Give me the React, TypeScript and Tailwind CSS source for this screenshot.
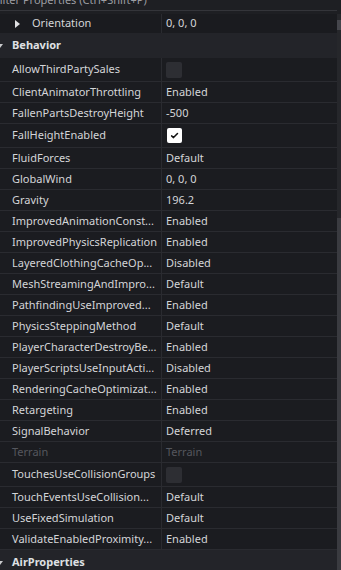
import React from 'react';

type Row = {
  name: string;
  value?: string;
  check?: boolean;
  disabled?: boolean;
};

// labels as the panel shows them (clipped with "...")
const rows: Row[] = [
  { name: 'AllowThirdPartySales', check: false },
  { name: 'ClientAnimatorThrottling', value: 'Enabled' },
  { name: 'FallenPartsDestroyHeight', value: '-500' },
  { name: 'FallHeightEnabled', check: true },
  { name: 'FluidForces', value: 'Default' },
  { name: 'GlobalWind', value: '0, 0, 0' },
  { name: 'Gravity', value: '196.2' },
  { name: 'ImprovedAnimationConst...', value: 'Enabled' },
  { name: 'ImprovedPhysicsReplication', value: 'Enabled' },
  { name: 'LayeredClothingCacheOp...', value: 'Disabled' },
  { name: 'MeshStreamingAndImpro...', value: 'Default' },
  { name: 'PathfindingUseImproved...', value: 'Enabled' },
  { name: 'PhysicsSteppingMethod', value: 'Default' },
  { name: 'PlayerCharacterDestroyBe...', value: 'Enabled' },
  { name: 'PlayerScriptsUseInputActi...', value: 'Disabled' },
  { name: 'RenderingCacheOptimizat...', value: 'Enabled' },
  { name: 'Retargeting', value: 'Enabled' },
  { name: 'SignalBehavior', value: 'Deferred' },
  { name: 'Terrain', value: 'Terrain', disabled: true },
  { name: 'TouchesUseCollisionGroups', check: false },
  { name: 'TouchEventsUseCollision...', value: 'Default' },
  { name: 'UseFixedSimulation', value: 'Default' },
  { name: 'ValidateEnabledProximity...', value: 'Enabled' },
];

const Checkbox = ({ checked }: { checked: boolean }) =>
  checked ? (
    <div className="w-[15px] h-[15px] ml-[1px] rounded-[2px] bg-white flex items-center justify-center">
      <svg width="11" height="11" viewBox="0 0 11 11">
        <path d="M2.6 5.9 L4.5 7.6 L8.5 3.5" stroke="#111" strokeWidth="1.5" fill="none" strokeLinecap="round" strokeLinejoin="round" />
      </svg>
    </div>
  ) : (
    <div className="w-[16px] h-[16px] rounded-[2px] bg-[#2d2e33]" />
  );

const PropRow = ({ row }: { row: Row }) => {
  const color = row.disabled ? 'text-[#55575e]' : 'text-[#d4d5d8]';
  return (
    <div className={`flex shrink-0 border-b border-[#2a2b30] ${row.check !== undefined ? 'h-[24px]' : 'h-[21px]'}`}>
      <div className={`w-[162px] shrink-0 flex items-center pl-[12px] border-r border-[#2a2b30] overflow-hidden whitespace-nowrap ${color}`}>
        {row.name}
      </div>
      <div className={`flex-1 flex items-center pl-[4px] ${color}`}>
        {row.check !== undefined ? <Checkbox checked={row.check} /> : row.value}
      </div>
    </div>
  );
};

const Section = ({ title }: { title: string }) => (
  <div className="h-[25px] shrink-0 bg-[#232429] flex items-center relative">
    <svg className="absolute left-[-3px] top-[11px]" width="6" height="5" viewBox="0 0 6 5">
      <path d="M0 0 L6 0 L3 4 Z" fill="#c9cacd" />
    </svg>
    <span className="pl-[12px] font-bold text-[#dfe0e3]">{title}</span>
  </div>
);

export default function App() {
  return (
    <div className="w-[341px] h-[570px] overflow-hidden bg-[#1b1c20] flex font-['Noto_Sans',sans-serif] text-[11px]">
      <div className="flex-1 flex flex-col min-w-0">
        <div className="h-[10px] shrink-0 overflow-hidden bg-[#1e1f23]">
          <div className="-mt-[8px] -ml-[6px] text-[#9c9da2] leading-[15px] whitespace-nowrap">Filter Properties (Ctrl+Shift+P)</div>
        </div>
        <div className="h-px shrink-0 bg-[#34353a]" />
        <div className="h-[3px] shrink-0 bg-[#1e1f23]" />
        <div className="h-[19px] flex shrink-0 bg-[#1a1b1f]">
          <div className="w-[162px] shrink-0 flex items-center border-r border-[#2a2b30] text-[#d4d5d8]">
            <svg className="ml-[15px] mr-[12px]" width="5" height="8" viewBox="0 0 5 8">
              <path d="M0 0 L5 4 L0 8 Z" fill="#e0e0e3" />
            </svg>
            <span>Orientation</span>
          </div>
          <div className="flex-1 flex items-center pl-[4px] text-[#d4d5d8]">0, 0, 0</div>
        </div>
        <Section title="Behavior" />
        {rows.map((r) => (
          <PropRow key={r.name} row={r} />
        ))}
        <Section title="AirProperties" />
      </div>
      <div className="w-[4px] shrink-0 flex flex-col">
        <div className="h-[14px] bg-[#1e1f23]" />
        <div className="h-[6px] bg-[#26272b]" />
        <div className="h-[10px] bg-[#45464c]" />
        <div className="h-[188px] bg-[#26272b]" />
        <div className="flex-1 bg-[#3a3b40]" />
      </div>
    </div>
  );
}
